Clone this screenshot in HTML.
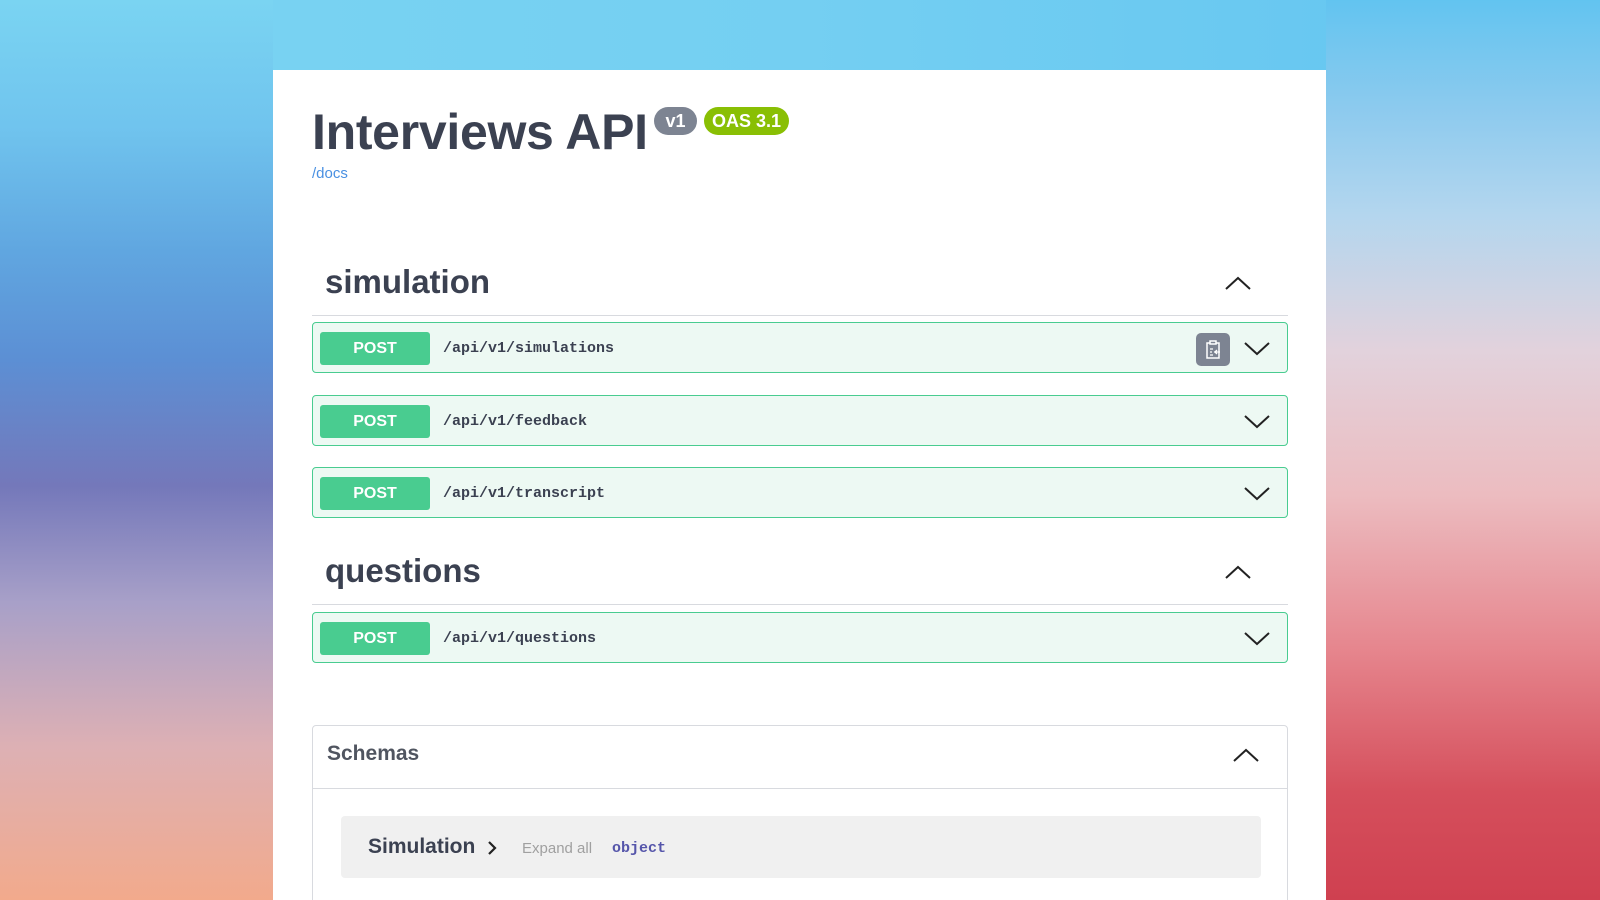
<!DOCTYPE html>
<html><head><meta charset="utf-8"><style>
*{box-sizing:border-box;margin:0;padding:0}
html,body{width:1600px;height:900px;overflow:hidden}
body{position:relative;font-family:"Liberation Sans",sans-serif;background:linear-gradient(90deg,#7ad4f2 0%,#74cff2 50%,#62c4f0 100%)}
.bgl{position:absolute;left:0;top:0;width:273px;height:900px;background:linear-gradient(180deg,#7ad4f2 0%,#70c4ee 14%,#60a6e0 28%,#5c8fd4 40%,#7478ba 54%,#a8a0c8 67%,#ddb0b4 83%,#f2aa8c 100%)}
.bgr{position:absolute;left:1326px;top:0;width:274px;height:900px;background:linear-gradient(180deg,#62c4f0 0%,#8ccaee 12%,#b4d6ee 24%,#e2d2dc 39%,#ecbcc0 55%,#e6868e 72%,#d54f5c 88%,#cf4050 100%)}
.card{position:absolute;left:273px;top:70px;width:1053px;height:830px;background:#fff;overflow:hidden}
.abs{position:absolute}
h1{position:absolute;left:39px;top:33px;font-size:50px;font-weight:bold;color:#3b4151;letter-spacing:-0.3px}
.badge{position:absolute;top:37px;height:28px;border-radius:14px;color:#fff;font-weight:bold;font-size:18px;line-height:28px;text-align:center}
.docs{position:absolute;left:39px;top:95px;font-size:15px;color:#4990e2}
.tag{position:absolute;left:52px;font-size:33px;font-weight:bold;color:#3b4151}
.div{position:absolute;left:39px;width:976px;height:1px;background:#d8dadf}
.op{position:absolute;left:39px;width:976px;height:51px;border:1px solid #49cc90;border-radius:4px;background:#edf9f3}
.post{position:absolute;left:7px;top:9px;width:110px;height:33px;background:#49cc90;border-radius:3px;color:#fff;font-weight:bold;font-size:16px;line-height:33px;text-align:center}
.path{position:absolute;left:130px;top:1px;line-height:49px;font-family:"Liberation Mono",monospace;font-weight:bold;font-size:15px;color:#3b4151}
.chev{position:absolute}
</style></head><body>
<div class="bgl"></div><div class="bgr"></div>
<div class="card">
<h1>Interviews API</h1>
<div class="badge" style="left:381px;width:43px;background:#7d8492">v1</div>
<div class="badge" style="left:431px;width:85px;background:#89bf04">OAS 3.1</div>
<div class="docs">/docs</div>

<div class="tag" style="top:193px">simulation</div>
<svg class="chev" style="left:952px;top:205px" width="26" height="16" viewBox="0 0 26 16"><path d="M1 14L13 3L25 14" fill="none" stroke="#222" stroke-width="2"/></svg>
<div class="div" style="top:245px"></div>

<div class="op" style="top:252px"><div class="post">POST</div><div class="path">/api/v1/simulations</div>
<div class="abs" style="left:883px;top:10px;width:34px;height:33px;background:#7d8492;border-radius:5px">
<svg width="34" height="33" viewBox="0 0 34 33"><path d="M11 10h3v-2h6v2h3v15h-12z M14 8v3h6v-3" fill="none" stroke="#fff" stroke-width="1.5"/><path d="M14 16h3M14 19h2M14 22h3M18 19h6M21 17l-2 2 2 2" fill="none" stroke="#fff" stroke-width="1.3"/></svg></div>
<svg class="chev" style="left:931px;top:18px" width="26" height="16" viewBox="0 0 26 16"><path d="M1 2L13 13L25 2" fill="none" stroke="#222" stroke-width="2"/></svg></div>

<div class="op" style="top:325px"><div class="post">POST</div><div class="path">/api/v1/feedback</div>
<svg class="chev" style="left:931px;top:18px" width="26" height="16" viewBox="0 0 26 16"><path d="M1 2L13 13L25 2" fill="none" stroke="#222" stroke-width="2"/></svg></div>

<div class="op" style="top:397px"><div class="post">POST</div><div class="path">/api/v1/transcript</div>
<svg class="chev" style="left:931px;top:18px" width="26" height="16" viewBox="0 0 26 16"><path d="M1 2L13 13L25 2" fill="none" stroke="#222" stroke-width="2"/></svg></div>

<div class="tag" style="top:482px">questions</div>
<svg class="chev" style="left:952px;top:494px" width="26" height="16" viewBox="0 0 26 16"><path d="M1 14L13 3L25 14" fill="none" stroke="#222" stroke-width="2"/></svg>
<div class="div" style="top:534px"></div>

<div class="op" style="top:542px"><div class="post">POST</div><div class="path">/api/v1/questions</div>
<svg class="chev" style="left:931px;top:18px" width="26" height="16" viewBox="0 0 26 16"><path d="M1 2L13 13L25 2" fill="none" stroke="#222" stroke-width="2"/></svg></div>

<div class="abs" style="left:39px;top:655px;width:976px;height:200px;border:1px solid #d8dadf;border-radius:4px">
<div class="abs" style="left:14px;top:16px;font-size:21px;font-weight:bold;color:#505560">Schemas</div>
<svg class="chev" style="left:920px;top:21px" width="26" height="16" viewBox="0 0 26 16"><path d="M1 14L13 3L25 14" fill="none" stroke="#222" stroke-width="2"/></svg>
<div class="abs" style="left:0;top:62px;width:974px;height:1px;background:#d8dadf"></div>
<div class="abs" style="left:28px;top:90px;width:920px;height:62px;background:#f0f0f0;border-radius:4px">
<div class="abs" style="left:27px;top:19px;font-size:21px;font-weight:bold;color:#3b4151">Simulation</div>
<svg class="abs" style="left:146px;top:25px" width="10" height="14" viewBox="0 0 10 14"><path d="M2 1L8 7L2 13" fill="none" stroke="#222" stroke-width="2.2"/></svg>
<div class="abs" style="left:181px;top:24px;font-size:15px;color:#a0a0a0">Expand all</div>
<div class="abs" style="left:271px;top:24px;font-size:15px;font-family:'Liberation Mono',monospace;font-weight:bold;color:#55a">object</div>
</div></div>
</div>
</body></html>
